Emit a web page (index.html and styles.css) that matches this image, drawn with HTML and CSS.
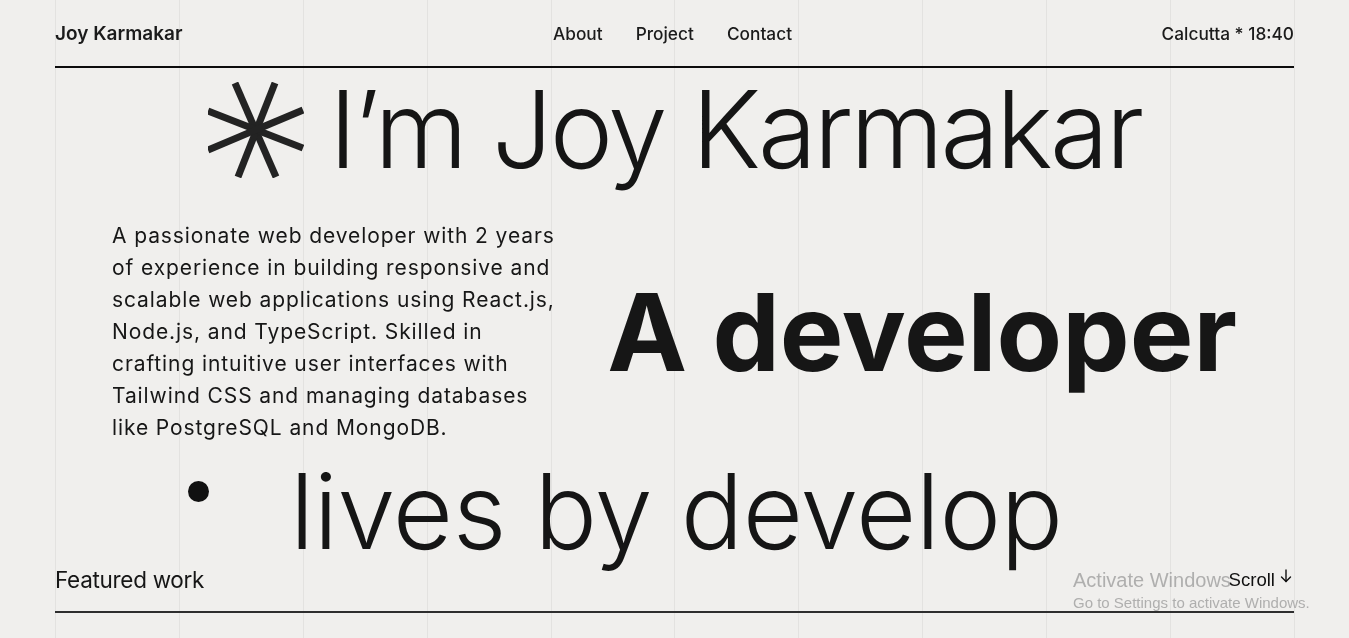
FILE: index.html
```html
<!DOCTYPE html>
<html lang="en">
<head>
<meta charset="utf-8">
<title>Joy Karmakar</title>
<link rel="stylesheet" href="styles.css">
</head>
<body>
<div class="grid-lines" aria-hidden="true">
  <span></span><span></span><span></span><span></span><span></span><span></span><span></span><span></span><span></span><span></span><span></span>
</div>
<div class="page">
  <header class="header">
    <a class="brand" href="#">Joy Karmakar</a>
    <nav class="nav">
      <a href="#">About</a>
      <a href="#">Project</a>
      <a href="#">Contact</a>
    </nav>
    <div class="clock">Calcutta * 18:40</div>
  </header>

  <section class="hero">
    <h1 class="hero-title">
      <svg class="star" viewBox="0 0 96 96" aria-hidden="true">
        <g stroke="#232323" stroke-width="7" stroke-linecap="butt" fill="none">
          <line x1="27" y1="1" x2="68" y2="95"/>
          <line x1="67" y1="1" x2="30" y2="95"/>
          <line x1="0" y1="29" x2="95" y2="66"/>
          <line x1="0" y1="68" x2="95" y2="28"/>
        </g>
      </svg>
      <span>I’m Joy Karmakar</span>
    </h1>

    <div class="hero-mid">
      <p class="intro">A passionate web developer with 2 years of experience in building responsive and scalable web applications using React.js, Node.js, and TypeScript. Skilled in crafting intuitive user interfaces with Tailwind CSS and managing databases like PostgreSQL and MongoDB.</p>
      <div class="role">A developer</div>
    </div>

    <div class="hero-bottom">
      <span class="dot"></span>
      <span class="lives">lives by develop</span>
    </div>
  </section>

  <section class="featured">
    <h2>Featured work</h2>
    <span class="scroll">Scroll
      <svg class="arrow" viewBox="0 0 12 14" aria-hidden="true">
        <g stroke="#111" stroke-width="1.4" fill="none" stroke-linecap="round" stroke-linejoin="round">
          <line x1="6" y1="1" x2="6" y2="12.5"/>
          <polyline points="1.5,8 6,12.5 10.5,8"/>
        </g>
      </svg>
    </span>
  </section>
</div>

<div class="activate">
  <div class="activate-title">Activate Windows</div>
  <div class="activate-sub">Go to Settings to activate Windows.</div>
</div>
</body>
</html>
```

FILE: styles.css
```css
* { box-sizing: border-box; }

html, body {
  margin: 0;
  padding: 0;
}

body {
  background: #f0efed;
  color: #161616;
  font-family: "Inter", "Roboto", sans-serif;
  overflow: hidden;
  height: 638px;
}

a { color: inherit; text-decoration: none; }

.grid-lines {
  position: fixed;
  top: 0;
  bottom: 0;
  left: 55px;
  right: 54px;
  display: flex;
  justify-content: space-between;
  pointer-events: none;
  z-index: 0;
}

.grid-lines span {
  width: 1px;
  height: 100%;
  background: #e3e2e0;
}

.page {
  position: relative;
  z-index: 1;
  padding: 0 55px;
}

.header {
  display: grid;
  grid-template-columns: 1fr auto 1fr;
  align-items: center;
  height: 68px;
  padding-top: 0;
  border-bottom: 2px solid #0c0c0c;
  font-size: 17.3px;
  font-weight: 500;
  color: #1b1b1b;
}

.brand {
  font-weight: 600;
  font-size: 19px;
}

.nav {
  display: flex;
  gap: 33px;
  margin-left: -4px;
}

.clock {
  justify-self: end;
}

.hero-title {
  margin: 5px 0 0;
  display: flex;
  align-items: center;
  justify-content: center;
  gap: 25px;
  font-weight: 300;
  font-size: 107px;
  line-height: 112px;
  letter-spacing: -3px;
  color: #151515;
}

.star {
  width: 96px;
  height: 96px;
  flex: none;
  margin-top: 2px;
}

.hero-mid {
  display: flex;
  justify-content: space-between;
  align-items: flex-start;
  padding: 0 57px;
  margin-top: 35px;
}

.intro {
  margin: 0;
  width: 456px;
  font-size: 21px;
  line-height: 32px;
  font-weight: 400;
  letter-spacing: 0.9px;
  color: #171717;
}

.role {
  font-size: 107px;
  font-weight: 700;
  letter-spacing: 0;
  line-height: 107px;
  margin-top: 59px;
  color: #161616;
}

.hero-bottom {
  display: flex;
  align-items: flex-start;
  padding-left: 133px;
  gap: 81px;
  margin-top: 15px;
}

.dot {
  width: 21px;
  height: 21px;
  border-radius: 50%;
  background: #111;
  flex: none;
  margin-top: 22px;
}

.lives {
  font-size: 104px;
  font-weight: 300;
  line-height: 104px;
  letter-spacing: -0.5px;
  color: #151515;
}

.featured {
  display: flex;
  justify-content: space-between;
  align-items: flex-end;
  border-bottom: 2px solid #2e2e2e;
  padding-bottom: 17px;
  margin-top: 3px;
}

.featured h2 {
  margin: 0;
  font-size: 22.5px;
  line-height: 28px;
  font-weight: 400;
  letter-spacing: -0.3px;
  color: #161616;
}

.scroll {
  display: flex;
  align-items: flex-start;
  gap: 5px;
  font-size: 18.6px;
  line-height: 20px;
  font-family: "Liberation Sans", Arial, sans-serif;
  color: #111;
  margin-bottom: 4px;
  margin-right: 2px;
}

.arrow {
  width: 12px;
  height: 14px;
  margin-top: -1px;
}

.activate {
  position: fixed;
  left: 1073px;
  top: 569px;
  z-index: 2;
  color: rgba(150, 150, 150, 0.72);
  font-family: "Liberation Sans", Arial, sans-serif;
  pointer-events: none;
}

.activate-title {
  font-size: 20px;
  line-height: 23px;
}

.activate-sub {
  font-size: 15px;
  line-height: 22px;
  margin-top: 0;
}
```
